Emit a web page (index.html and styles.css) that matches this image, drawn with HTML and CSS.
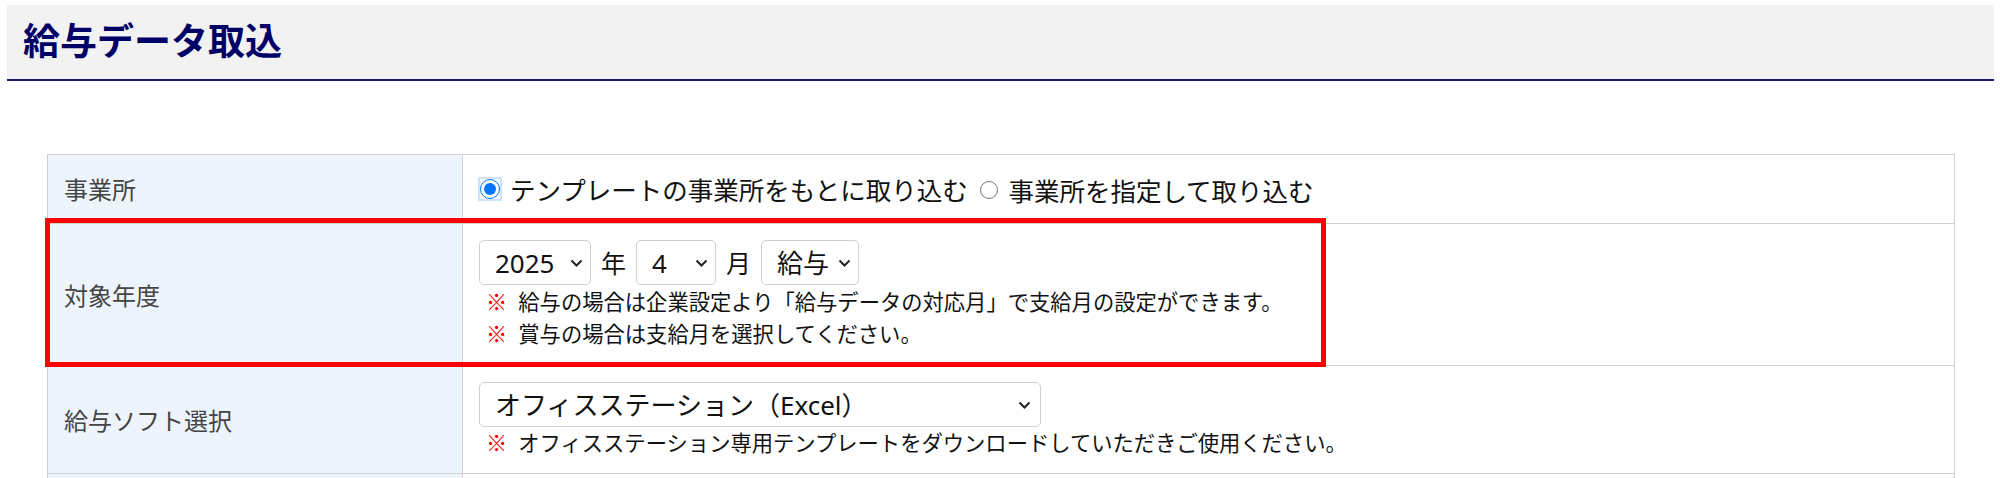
FILE: index.html
```html
<!DOCTYPE html>
<html lang="ja">
<head>
    <meta charset="UTF-8">
    <meta name="viewport" content="width=device-width, initial-scale=1.0">
    <title>給与データ取込</title>
    <link rel="stylesheet" href="styles.css">
</head>
<body>
    <div class="page-header">
        <h1 class="page-title">給与データ取込</h1>
    </div>

    <div class="content">
        <div class="form-table-wrap">
            <table class="form-table">
                <tr>
                    <th>事業所</th>
                    <td>
                        <label class="radio-label">
                            <input type="radio" name="office" value="template" class="is-focus" checked>
                            テンプレートの事業所をもとに取り込む
                        </label>
                        <label class="radio-label">
                            <input type="radio" name="office" value="select">
                            事業所を指定して取り込む
                        </label>
                    </td>
                </tr>
                <tr>
                    <th>対象年度</th>
                    <td>
                        <div class="date-row">
                            <span class="select select-year">
                                <select name="year">
                                    <option>2025</option>
                                    <option>2024</option>
                                </select>
                                <svg class="chevron" viewBox="0 0 13 8"><path d="M1.5 1.5 L6.5 6.5 L11.5 1.5"/></svg>
                            </span>
                            <span class="unit">年</span>
                            <span class="select select-month">
                                <select name="month">
                                    <option>4</option>
                                    <option>5</option>
                                </select>
                                <svg class="chevron" viewBox="0 0 13 8"><path d="M1.5 1.5 L6.5 6.5 L11.5 1.5"/></svg>
                            </span>
                            <span class="unit">月</span>
                            <span class="select select-kind">
                                <select name="kind">
                                    <option>給与</option>
                                    <option>賞与</option>
                                </select>
                                <svg class="chevron" viewBox="0 0 13 8"><path d="M1.5 1.5 L6.5 6.5 L11.5 1.5"/></svg>
                            </span>
                        </div>
                        <p class="note"><span class="mark">※</span>給与の場合は企業設定より「給与データの対応月」で支給月の設定ができます。</p>
                        <p class="note"><span class="mark">※</span>賞与の場合は支給月を選択してください。</p>
                    </td>
                </tr>
                <tr>
                    <th>給与ソフト選択</th>
                    <td>
                        <span class="select select-soft">
                            <select name="soft">
                                <option>オフィスステーション（Excel）</option>
                            </select>
                            <svg class="chevron" viewBox="0 0 13 8"><path d="M1.5 1.5 L6.5 6.5 L11.5 1.5"/></svg>
                        </span>
                        <p class="note note-soft"><span class="mark">※</span>オフィスステーション専用テンプレートをダウンロードしていただきご使用ください。</p>
                    </td>
                </tr>
                <tr class="row-next">
                    <th></th>
                    <td></td>
                </tr>
            </table>
            <!-- annotation frame over the target year row -->
            <div class="highlight"></div>
        </div>
    </div>
</body>
</html>
```

FILE: styles.css
```css
/* base */
body {
    margin: 0;
    font-family: "Noto Sans", "Noto Sans CJK JP", sans-serif;
    color: #111;
    background-color: #fff;
}

.page-header {
    margin: 5px 6px 0 7px;
    height: 74px;
    background-color: #f2f2f2;
    border-bottom: 2px solid #1b1b72;
    display: flex;
    align-items: center;
}

.page-title {
    margin: 0;
    padding: 0 0 6px 16px;
    font-family: "Noto Sans CJK JP", sans-serif;
    font-size: 37px;
    font-weight: bold;
    color: #000066;
    line-height: 1.2;
}

.content {
    padding: 73px 45px 0 47px;
}

.form-table-wrap {
    position: relative;
}

.form-table {
    width: 100%;
    border-collapse: collapse;
}

.form-table th,
.form-table td {
    border: 1px solid #d0d0d0;
    padding: 16px;
    vertical-align: middle;
    text-align: left;
}

.form-table th {
    width: 382px;
    background-color: #edf4fc;
    font-family: "Noto Sans CJK JP", sans-serif;
    font-weight: normal;
    font-size: 24px;
    color: #444;
    line-height: 36px;
}

.form-table td {
    font-size: 25.5px;
    line-height: 35px;
}

.row-next th,
.row-next td {
    height: 40px;
}

/* radios */
.radio-label {
    display: inline-flex;
    align-items: center;
    font-family: "Noto Sans CJK JP", sans-serif;
    margin-right: 4px;
}

.radio-label input {
    width: 18px;
    height: 18px;
    margin: 0 10px 0 2px;
    accent-color: #0075ff;
}

.radio-label input.is-focus {
    width: 20px;
    height: 20px;
    margin-left: 1px;
    border-radius: 50%;
    box-shadow: 0 0 0 2px rgba(0, 117, 255, 0.2);
}

/* selects */
.date-row {
    display: flex;
    align-items: center;
    gap: 10px;
}

.unit {
    font-family: "Noto Sans CJK JP", sans-serif;
    font-size: 25px;
}

.select {
    position: relative;
    display: inline-block;
    vertical-align: top;
}

.select select {
    appearance: none;
    -webkit-appearance: none;
    display: block;
    width: 100%;
    height: 45px;
    padding: 0 30px 0 15px;
    border: 1px solid #cfcfcf;
    border-radius: 5px;
    background-color: #fff;
    font-family: "Noto Sans", "Noto Sans CJK JP", sans-serif;
    font-size: 26px;
    color: #111;
}

.select .chevron {
    position: absolute;
    right: 8px;
    top: 50%;
    width: 13px;
    height: 8px;
    margin-top: -4px;
    fill: none;
    stroke: #222;
    stroke-width: 2;
    pointer-events: none;
}

.select-year { width: 112px; }
.select-month { width: 80px; }
.select-kind { width: 98px; }
.select-soft { width: 562px; }

.select-soft .chevron {
    right: 10px;
}

/* notes */
.note {
    margin: 0;
    padding-left: 7px;
    font-family: "Noto Sans CJK JP", sans-serif;
    font-size: 21.3px;
    line-height: 32px;
}

.note .mark {
    color: #ff0000;
    font-weight: bold;
    margin-right: 11px;
}

.note-soft {
    line-height: 30px;
}

/* annotation */
.highlight {
    position: absolute;
    left: -2px;
    top: 64px;
    width: 1271px;
    height: 139px;
    border: 5px solid #ff0000;
    pointer-events: none;
}
```
